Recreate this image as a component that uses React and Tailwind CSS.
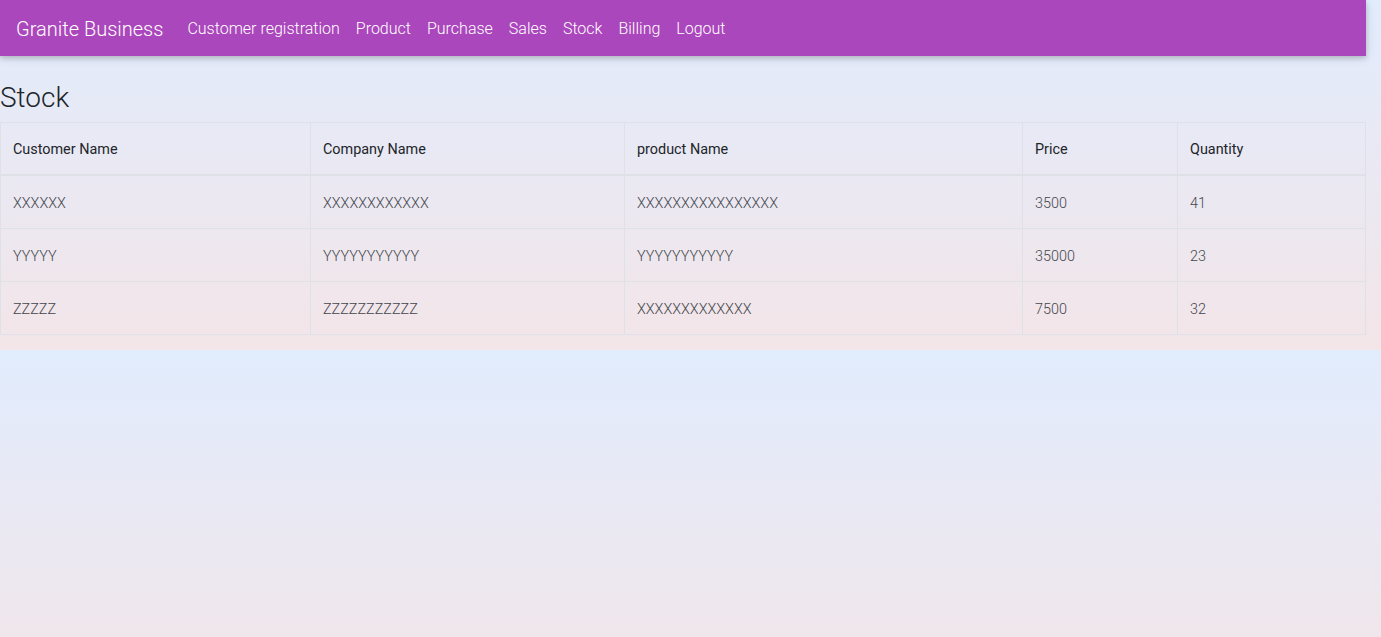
import React from 'react';

const links = ["Customer registration", "Product", "Purchase", "Sales", "Stock", "Billing", "Logout"];

const rows = [
  { customer: "XXXXXX", company: "XXXXXXXXXXXX", product: "XXXXXXXXXXXXXXXX", price: "3500", qty: "41" },
  { customer: "YYYYY", company: "YYYYYYYYYYY", product: "YYYYYYYYYYY", price: "35000", qty: "23" },
  { customer: "ZZZZZ", company: "ZZZZZZZZZZZ", product: "XXXXXXXXXXXXX", price: "7500", qty: "32" },
];

const th = "px-3 pt-[16px] pb-[14px] leading-[21px] text-left font-normal text-[#212529] border border-[#dee2e6]";
const td = "px-3 pt-[17px] pb-[14px] leading-[21px] border border-[#dee2e6]";

const App = () => {
  return (
    <div className="min-h-[637px] font-['Roboto',sans-serif] bg-[linear-gradient(to_bottom,#e1ecfd,#f3e5e8)] bg-[length:100%_350px] bg-repeat-y">
      <div className="w-[1366px] pb-4">
        <nav className="h-14 flex items-center px-4 pt-[2px] bg-[#ab47bc] shadow-[0_2px_5px_0_rgba(0,0,0,0.16),0_2px_10px_0_rgba(0,0,0,0.12)]">
          <span className="text-[20px] font-light text-white mr-4">Granite Business</span>
          <ul className="flex items-center">
            {links.map((l) => (
              <li key={l} className="px-2 text-base font-light text-white">{l}</li>
            ))}
          </ul>
        </nav>

        <h3 className="mt-[25px] mb-[7px] text-[28px] leading-[1.2] font-light text-[#212529]">Stock</h3>

        <table className="w-full border-collapse text-[14.4px]">
          <thead>
            <tr className="border-b-2 border-[#dee2e6]">
              <th className={`w-[310px] ${th}`}>Customer Name</th>
              <th className={`w-[314px] ${th}`}>Company Name</th>
              <th className={`w-[398px] ${th}`}>product Name</th>
              <th className={`w-[155px] ${th}`}>Price</th>
              <th className={th}>Quantity</th>
            </tr>
          </thead>
          <tbody>
            {rows.map((r, i) => (
              <tr key={i} className="font-light text-[#43474d]">
                <td className={td}>{r.customer}</td>
                <td className={td}>{r.company}</td>
                <td className={td}>{r.product}</td>
                <td className={td}>{r.price}</td>
                <td className={td}>{r.qty}</td>
              </tr>
            ))}
          </tbody>
        </table>
      </div>
    </div>
  );
};

export default App;
